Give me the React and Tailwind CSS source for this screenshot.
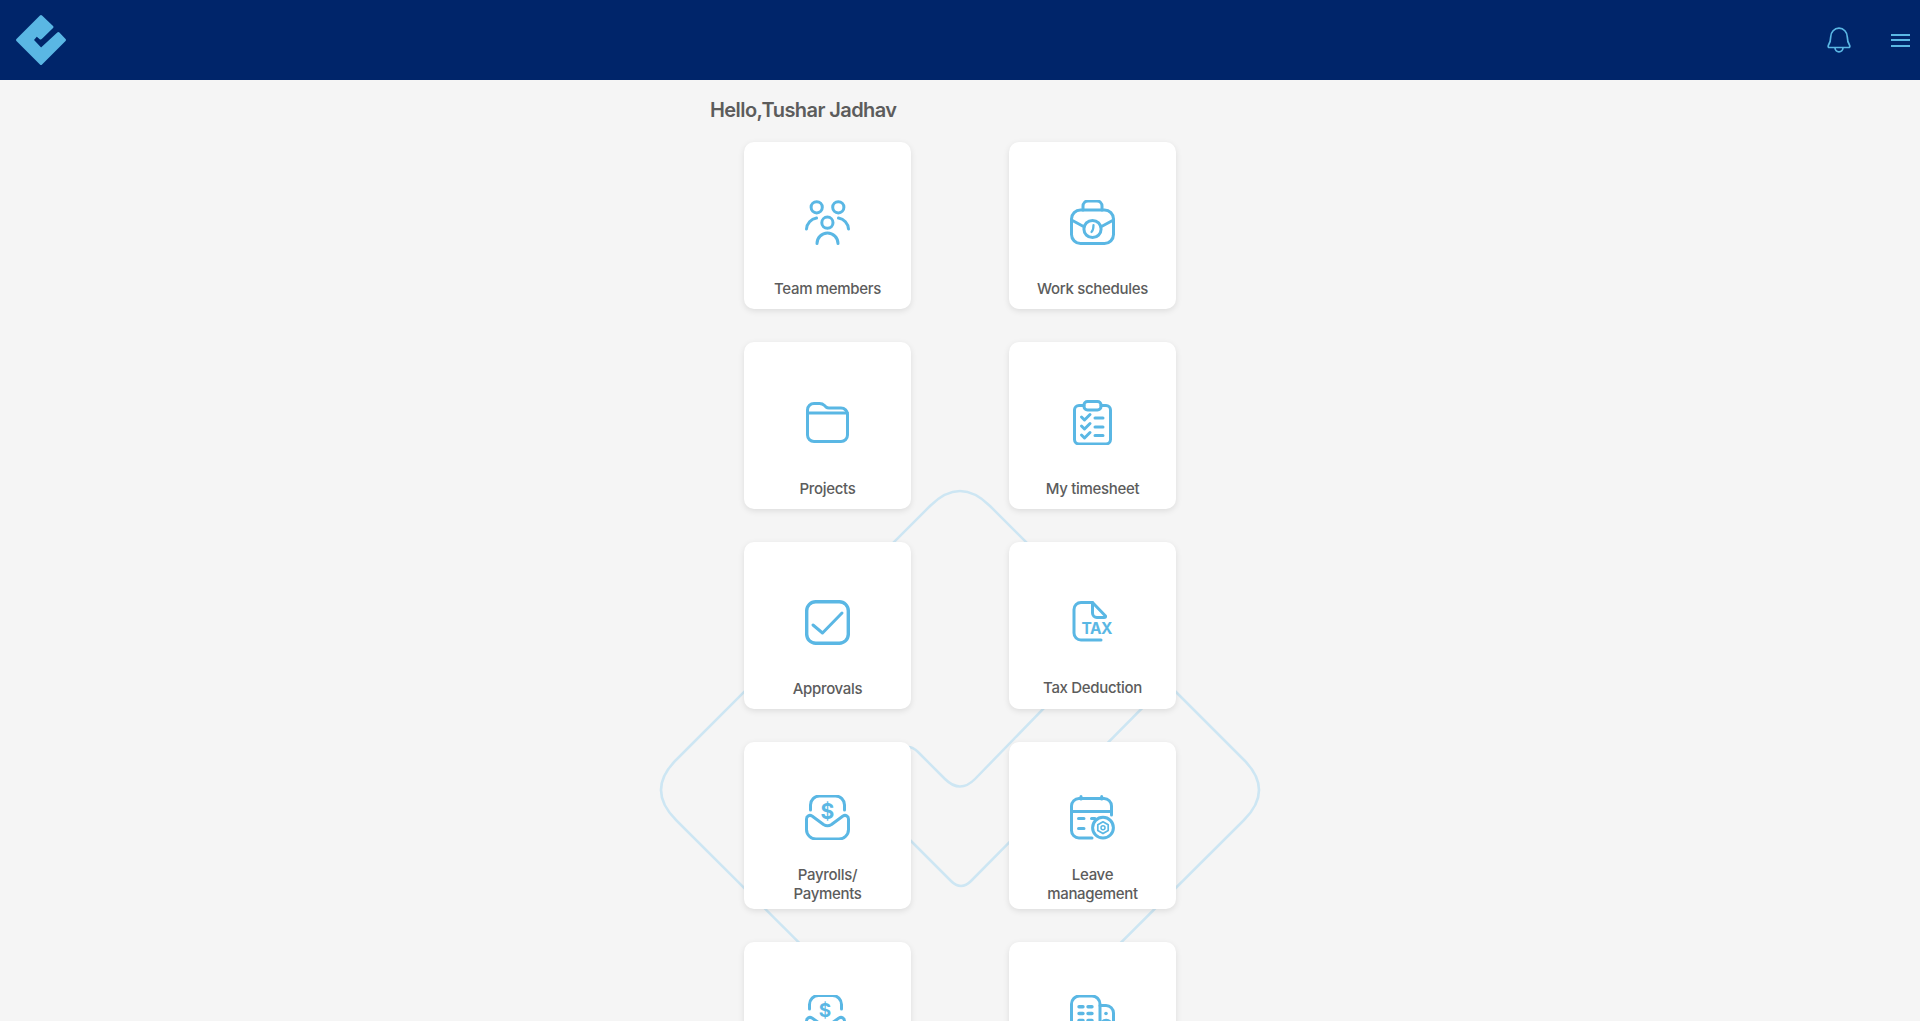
import React from 'react';

const BLUE = '#5ab7e4';

const Svg = ({ children }) => (
  <svg viewBox="0 0 45 45" fill="none" stroke={BLUE} strokeWidth="3" strokeLinecap="round" strokeLinejoin="round" className="w-[45px] h-[45px] shrink-0">
    {children}
  </svg>
);

const TeamIcon = () => (
  <Svg>
    <circle cx="11.7" cy="7.3" r="5.6" />
    <circle cx="33.3" cy="7.3" r="5.6" />
    <circle cx="22.4" cy="22.7" r="5.6" />
    <path d="M1.5 29 A12 12 0 0 1 11.5 18" />
    <path d="M43.5 29 A12 12 0 0 0 33.5 18" />
    <path d="M12 43.5 A10.5 10.5 0 0 1 33 43.5" />
  </Svg>
);

const ScheduleIcon = () => (
  <Svg>
    <path d="M13 10 V6 a5 5 0 0 1 5-5 h9 a5 5 0 0 1 5 5 v4" />
    <rect x="1.5" y="10" width="42" height="33.5" rx="9" />
    <path d="M1.5 20 L13.5 26.5 M43.5 20 L31.5 26.5" />
    <circle cx="22.5" cy="29" r="8.6" />
    <path d="M23.5 25 Q23.5 30 21.5 32" strokeWidth="2.2" />
  </Svg>
);

const FolderIcon = () => (
  <Svg>
    <path d="M2.5 12.5 V10 a6.5 6.5 0 0 1 6.5-6.5 h5.5 q3 0 5 2 l1.5 1.5 q1.2 1 3 1 h12 a6.5 6.5 0 0 1 6.5 6.5 V35 a6.5 6.5 0 0 1-6.5 6.5 H9 a6.5 6.5 0 0 1-6.5-6.5 Z" />
    <path d="M2.5 13 H42.5" />
  </Svg>
);

const TimesheetIcon = () => (
  <Svg>
    <path d="M14 5.5 H9 a4.5 4.5 0 0 0-4.5 4.5 V39.5 a4.5 4.5 0 0 0 4.5 4.5 H36 a4.5 4.5 0 0 0 4.5-4.5 V10 A4.5 4.5 0 0 0 36 5.5 H31" />
    <rect x="14" y="1.5" width="17" height="8.5" rx="3.5" />
    <path d="M11.5 17 l3 3 l5.5-5.5 M11.5 26 l3 3 l5.5-5.5 M11.5 35 l3 3 l5.5-5.5" />
    <path d="M25 18 H33 M25 27 H33 M25 35.5 H33" />
  </Svg>
);

const ApprovalIcon = () => (
  <Svg>
    <rect x="1.7" y="1.7" width="41.6" height="41.6" rx="9" strokeWidth="3.4" />
    <path d="M8 25 L17.5 33 L37 13" />
  </Svg>
);

const TaxIcon = () => (
  <Svg>
    <path d="M22.5 2.5 H11 a7 7 0 0 0-7 7 V33 a7 7 0 0 0 7 7 H31" />
    <path d="M22.5 2.5 L35.5 16 Q36 17.5 34 17.5 H27 a4.5 4.5 0 0 1-4.5-4.5 Z" />
    <text x="11.5" y="34" letterSpacing="-0.5" fill={BLUE} stroke="none" fontFamily="Inter, sans-serif" fontWeight="700" fontSize="15.5">TAX</text>
  </Svg>
);

const PayrollIcon = () => (
  <Svg>
    <path d="M5.5 15 V10 a9 9 0 0 1 9-9 h16 a9 9 0 0 1 9 9 v5" />
    <path d="M1.5 24 c0-3 3-4.5 5.5-3 L18.5 29.5 q4 2.5 8 0 L38 21 c2.5-1.5 5.5 0 5.5 3 V34.5 a9.5 9.5 0 0 1-9.5 9.5 H11 a9.5 9.5 0 0 1-9.5-9.5 Z" />
    <text x="22.4" y="24" textAnchor="middle" fill={BLUE} stroke="none" fontFamily="Inter, sans-serif" fontWeight="700" fontSize="21">$</text>
  </Svg>
);

const LeaveIcon = () => (
  <Svg>
    <path d="M22 43 H9 a7.5 7.5 0 0 1-7.5-7.5 V11 A7.5 7.5 0 0 1 9 3.5 H34 A7.5 7.5 0 0 1 41.5 11 V20" />
    <path d="M1.5 16.5 H41.5 M11 1.5 V4 M31.7 1.5 V4" />
    <path d="M8.5 23.5 H14 M8.5 33.5 H14 M21.5 23.5 H25" />
    <circle cx="33" cy="32.7" r="10.4" fill="#ffffff" />
    <path d="M33 26.8 L38.2 29.8 V35.6 L33 38.6 L27.8 35.6 V29.8 Z" strokeWidth="1.7" />
    <circle cx="33" cy="32.7" r="2" strokeWidth="1.5" />
  </Svg>
);

const ExpenseIcon = () => (
  <Svg>
    <path d="M4.5 14 V9.5 a9 9 0 0 1 9-9 h14 a9 9 0 0 1 9 9 v4.5" />
    <path d="M1.5 26 c0-3 3-4.5 5.5-3 L17 30 q3.5 2.5 7 0 L34 23 c2.5-1.5 5.5 0 5.5 3 V36 a8.5 8.5 0 0 1-8.5 8.5 H10 a8.5 8.5 0 0 1-8.5-8.5 Z" />
    <text x="20" y="22" textAnchor="middle" fill={BLUE} stroke="none" fontFamily="Inter, sans-serif" fontWeight="700" fontSize="19">$</text>
  </Svg>
);

const BuildingIcon = () => (
  <Svg>
    <path d="M1.5 44 V9 a8 8 0 0 1 8-8 H22 a8 8 0 0 1 8 8 V44" />
    <path d="M30 10.5 H36 a7.5 7.5 0 0 1 7.5 7.5 V44" />
    <path d="M9 11.7 H13 M18 11.7 H22 M9 18.5 H13 M18 18.5 H22 M9 25.5 H13 M18 25.5 H22" strokeWidth="3.4" />
    <circle cx="36" cy="18.5" r="1.8" fill={BLUE} stroke="none" />
    <path d="M31 28 Q36 22.5 41.5 28" />
  </Svg>
);

const tiles = [
  { label: 'Team members', icon: TeamIcon },
  { label: 'Work schedules', icon: ScheduleIcon },
  { label: 'Projects', icon: FolderIcon },
  { label: 'My timesheet', icon: TimesheetIcon },
  { label: 'Approvals', icon: ApprovalIcon },
  { label: 'Tax Deduction', icon: TaxIcon, labelClass: 'mt-[33px]' },
  { label: 'Payrolls/ Payments', icon: PayrollIcon, tall: true },
  { label: 'Leave management', icon: LeaveIcon, tall: true },
  { icon: ExpenseIcon, tall: true },
  { icon: BuildingIcon, tall: true },
];

const Tile = ({ label, icon: Icon, tall, labelClass }) => (
  <div className={`w-[167px] h-[167px] bg-white rounded-[10px] shadow-[0_2px_6px_rgba(0,0,0,0.1)] flex flex-col items-center ${tall ? 'pt-[53px]' : 'pt-[58px]'}`}>
    <Icon />
    {label && (
      <div className={`w-[120px] text-center text-[15px] leading-[19px] tracking-[-0.32px] font-medium text-[#5c5c5c] ${labelClass || (tall ? 'mt-[25px]' : 'mt-[34px]')}`}>
        {label}
      </div>
    )}
  </div>
);

const Logo = () => (
  <svg viewBox="11 10 60 60" className="w-[60px] h-[60px]">
    <path
      d="M41 16.5 L52 27 L40.7 38 L36.7 34.5 L32 40 L41 49.5 L58.3 33.5 L64.5 40 L41 63.5 L17.5 40 Z"
      fill={BLUE}
      stroke={BLUE}
      strokeWidth="3"
      strokeLinejoin="round"
    />
  </svg>
);

const Bell = () => (
  <svg viewBox="0 0 26 27" fill="none" stroke={BLUE} strokeWidth="1.7" strokeLinejoin="round" className="w-[26px] h-[27px]">
    <path d="M2.3 18.5 C4 16 4.7 13.5 4.7 10 A8.3 8.8 0 0 1 21.3 10 C21.3 13.5 22 16 23.7 18.5 Q24.3 20.5 22.5 20.5 H3.5 Q1.7 20.5 2.3 18.5 Z" />
    <path d="M9 20.8 a4 4 0 0 0 8 0" />
  </svg>
);

// the big faded logo outline behind the tiles
const Watermark = () => (
  <svg className="absolute inset-0 w-full h-full pointer-events-none" viewBox="0 0 1920 1021" fill="none">
    <path
      d="M930 506 Q960 476 990 506 L1117 633 L975 779 Q960 794 945 779 L918 752 Q908 742 898 752 L850 780 L951 881 Q961 891 971 881 L1167 683 L1244 760 Q1274 790 1244 820 L990 1073 Q960 1103 930 1073 L676 820 Q646 790 676 760 Z"
      stroke="#cde6f3"
      strokeWidth="2.5"
      strokeLinejoin="round"
    />
  </svg>
);

export default function App() {
  return (
    <div className="relative h-screen overflow-hidden bg-[#f5f5f5] flex flex-col font-['Inter',sans-serif]">
      <Watermark />
      <header className="relative h-20 shrink-0 bg-[#00256a] flex items-center justify-between pl-[11px] pr-[10px]">
        <Logo />
        <div className="flex items-center gap-[39px]">
          <Bell />
          <div className="flex flex-col gap-[3.5px] w-[19px]">
            <span className="h-[2px] bg-[#5ab7e4]" />
            <span className="h-[2px] bg-[#5ab7e4]" />
            <span className="h-[2px] bg-[#5ab7e4]" />
          </div>
        </div>
      </header>
      <main className="relative w-[500px] mx-auto pt-[18px]">
        <h1 className="text-[20px] leading-[24px] tracking-[-0.58px] font-semibold text-[#5c5c5c] mb-5">Hello,Tushar Jadhav</h1>
        <div className="grid grid-cols-[167px_167px] gap-x-[98px] gap-y-[33px] justify-center">
          {tiles.map((tile, i) => (
            <Tile key={i} {...tile} />
          ))}
        </div>
      </main>
    </div>
  );
}
